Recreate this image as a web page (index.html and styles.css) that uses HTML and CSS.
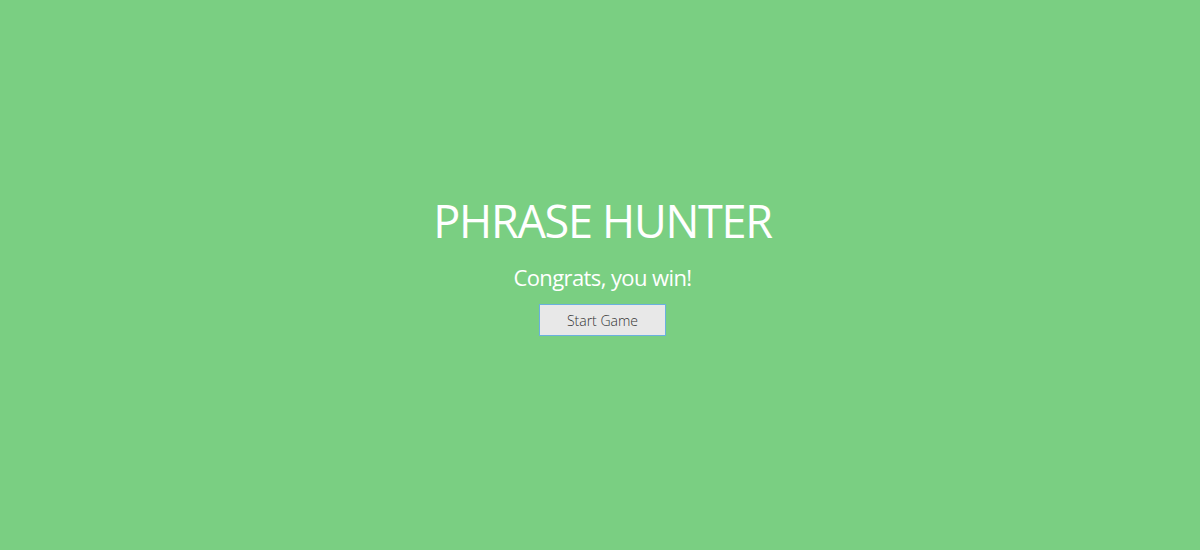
FILE: index.html
```html
<!DOCTYPE html>
<html lang="en">
<head>
<meta charset="utf-8">
<title>Phrase Hunter</title>
<link rel="stylesheet" href="styles.css">
</head>
<body>
<div class="overlay win">
  <h2 class="title">PHRASE HUNTER</h2>
  <h1 class="message">Congrats, you win!</h1>
  <button class="btn-reset">Start Game</button>
</div>
</body>
</html>
```
FILE: styles.css
```css
html, body {
  margin: 0;
  padding: 0;
  height: 100%;
}
body {
  font-family: "Open Sans", "Liberation Sans", sans-serif;
  background: #7acf82;
}
.overlay {
  box-sizing: border-box;
  height: 550px;
  display: flex;
  flex-direction: column;
  align-items: center;
  padding-top: 194px;
  padding-left: 5px;
  color: #fff;
}
.title {
  margin: 0;
  font-size: 45px;
  font-weight: 400;
  line-height: 54px;
  letter-spacing: -1.3px;
}
.message {
  margin: 14px 0 0;
  font-size: 22px;
  font-weight: 400;
  line-height: 30px;
  letter-spacing: -0.6px;
}
.btn-reset {
  margin-top: 12px;
  width: 127px;
  height: 32px;
  box-sizing: border-box;
  border: 1px solid #6ab0de;
  background: #e8e8e8;
  color: #333;
  font-family: "Open Sans", sans-serif;
  font-size: 14px;
  font-weight: 300;
  padding: 0;
}
```
